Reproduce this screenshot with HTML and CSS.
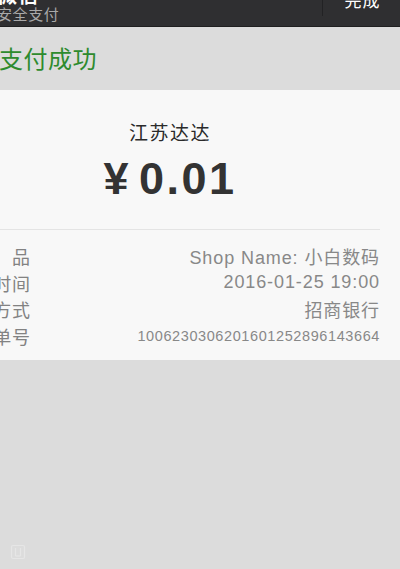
FILE: index.html
```html
<!DOCTYPE html>
<html lang="zh-CN">
<head>
<meta charset="utf-8">
<title>支付成功</title>
<link rel="stylesheet" href="styles.css">
</head>
<body>
<header class="topbar">
  <div class="brand">
    <div class="brand-title">微信</div>
    <div class="brand-sub">安全支付</div>
  </div>
  <div class="done">完成</div>
</header>
<section class="status">
  <h1 class="status-text">支付成功</h1>
</section>
<main class="card">
  <div class="summary">
    <div class="merchant">江苏达达</div>
    <div class="amount"><span class="yen">¥</span>0.01</div>
  </div>
  <div class="details">
    <div class="row"><span class="label">商　　品</span><span class="value">Shop Name: 小白数码</span></div>
    <div class="row"><span class="label">交易时间</span><span class="value">2016-01-25 19:00</span></div>
    <div class="row"><span class="label">支付方式</span><span class="value">招商银行</span></div>
    <div class="row"><span class="label">交易单号</span><span class="value value-small">1006230306201601252896143664</span></div>
  </div>
</main>
<div class="footer-icon">
  <svg width="16" height="16" viewBox="0 0 16 16" fill="none" stroke="#e6e6e6" stroke-width="1.2">
    <rect x="1.5" y="1.5" width="13" height="13" rx="1.5"/>
    <line x1="5.5" y1="4" x2="5.5" y2="12"/>
    <line x1="10.5" y1="4" x2="10.5" y2="12"/>
    <line x1="5.5" y1="12" x2="10.5" y2="12"/>
  </svg>
</div>
</body>
</html>
```
FILE: styles.css
```css
html, body {
  margin: 0;
  padding: 0;
}
body {
  width: 400px;
  height: 569px;
  overflow: hidden;
  background: #dcdcdc;
  font-family: "Liberation Sans", "Noto Sans CJK SC", sans-serif;
}
.topbar {
  height: 26px;
  background: #2f2f31;
  border-bottom: 1px solid #1f1f20;
  display: flex;
  justify-content: space-between;
  overflow: hidden;
}
.brand {
  margin-left: -3px;
  display: flex;
  flex-direction: column;
  justify-content: flex-end;
  padding-bottom: 2px;
}
.brand-title {
  color: #ffffff;
  font-size: 20px;
  font-weight: bold;
  line-height: 20px;
  letter-spacing: 1px;
  height: 6px;
  overflow: visible;
  white-space: nowrap;
  display: flex;
  align-items: flex-end;
}
.brand-sub {
  color: #a9a9a9;
  font-size: 15px;
  line-height: 18px;
  letter-spacing: 0.6px;
  white-space: nowrap;
}
.done {
  width: 78px;
  border-left: 1px solid #222224;
  height: 24px;
  color: #ffffff;
  font-size: 17px;
  letter-spacing: 1px;
  text-align: center;
  line-height: 20px;
  margin-top: -8px;
  box-sizing: border-box;
  padding-left: 2px;
}
.status {
  height: 63px;
  display: flex;
  align-items: center;
  padding-top: 2px;
  box-sizing: border-box;
}
.status-text {
  margin: 0 0 0 -1px;
  font-size: 24px;
  font-weight: normal;
  color: #2e8b2e;
  letter-spacing: 0.5px;
  line-height: 30px;
}
.card {
  background: #f8f8f8;
  padding-bottom: 11px;
}
.summary {
  margin: 0 20px 0 -40px;
  padding-top: 32px;
  padding-bottom: 25px;
  border-bottom: 1px solid #e4e4e4;
  text-align: center;
}
.merchant {
  font-size: 19px;
  letter-spacing: 1.5px;
  line-height: 24px;
  color: #2a2a2a;
}
.amount {
  margin-top: 8px;
  font-size: 45px;
  font-weight: bold;
  line-height: 50px;
  letter-spacing: 2.5px;
  color: #333333;
}
.yen {
  margin-right: 8px;
}
.details {
  padding: 13px 20px 0 0;
}
.row {
  height: 26.5px;
  display: flex;
  align-items: center;
  justify-content: space-between;
  color: #888888;
}
.label {
  width: 84px;
  margin-left: -53px;
  text-align: right;
  font-size: 18px;
  letter-spacing: 0.9px;
  white-space: nowrap;
  color: #828282;
}
.value {
  font-size: 18px;
  letter-spacing: 0.9px;
  white-space: nowrap;
}
.value-small {
  font-size: 14.5px;
  letter-spacing: 0.6px;
}
.footer-icon {
  margin-top: 184px;
  margin-left: 10px;
  width: 16px;
  height: 16px;
}
.footer-icon svg {
  display: block;
}
```
